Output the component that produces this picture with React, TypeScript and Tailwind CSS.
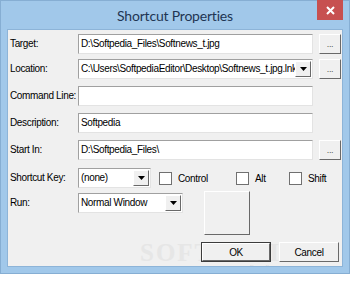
import React from "react";

const font = { fontFamily: '"Liberation Sans", Arial, sans-serif' };
const txt = "text-[10px] tracking-[-0.35px] text-black";

function Edit({ value = "", w = "w-[235px]" }: { value?: string; w?: string }) {
  return (
    <div
      className={`${w} h-[20px] shrink-0 overflow-hidden whitespace-nowrap border border-t-[#a0a0a0] border-l-[#a0a0a0] border-b-[#e3e3e3] border-r-[#e3e3e3] bg-white pl-[2px] leading-[18px] ${txt}`}
    >
      {value}
    </div>
  );
}

function Arrow() {
  return (
    <div className="flex h-[16px] w-[16px] shrink-0 items-center justify-center border border-t-white border-l-white border-b-[#696969] border-r-[#696969] bg-[#f0f0f0]">
      <svg width="7" height="4" viewBox="0 0 7 4">
        <path d="M0 0h7L3.5 4z" fill="#000" />
      </svg>
    </div>
  );
}

function Combo({ value, w }: { value: string; w: string }) {
  return (
    <div
      className={`${w} flex h-[20px] shrink-0 items-center border border-t-[#a0a0a0] border-l-[#a0a0a0] border-b-[#e3e3e3] border-r-[#e3e3e3] bg-white pr-[1px]`}
    >
      <div className={`min-w-0 flex-1 overflow-hidden whitespace-nowrap pl-[2px] leading-[18px] ${txt}`}>
        {value}
      </div>
      <Arrow />
    </div>
  );
}

function Btn({ children, w, h = "h-[20px]", def = false }: { children?: React.ReactNode; w: string; h?: string; def?: boolean }) {
  return (
    <div className={`${w} ${h} shrink-0 ${def ? "border border-[#3c3c3c]" : ""}`}>
      <div className={`flex h-full w-full items-center justify-center border border-t-white border-l-white border-b-[#696969] border-r-[#696969] bg-[#f0f0f0] ${txt}`}>
        {children}
      </div>
    </div>
  );
}

function Dots() {
  return (
    <div className="ml-[6px]">
      <Btn w="w-[22px]">
        <span className="text-[9px] leading-none text-[#555]">...</span>
      </Btn>
    </div>
  );
}

function Label({ children }: { children: React.ReactNode }) {
  return <div className={`w-[70px] shrink-0 whitespace-nowrap pl-[2px] leading-[20px] ${txt}`}>{children}</div>;
}

function Check({ label, w }: { label: string; w: string }) {
  return (
    <div className={`${w} flex shrink-0 items-center gap-[6px]`}>
      <div className="h-[13px] w-[13px] border border-[#707070] bg-white" />
      <span className={txt}>{label}</span>
    </div>
  );
}

export default function App() {
  return (
    <div className="h-[282px] w-[350px] bg-white" style={font}>
      <div className="flex h-[274px] w-[350px] flex-col border border-[#86aed3] bg-[#a1c8ea] px-[6px] pb-[6px]">
        {/* title bar */}
        <div className="relative flex h-[28px] shrink-0 items-center justify-center pt-[1px]">
          <span
            className="text-[14px] tracking-[-0.2px] text-[#1f3553]"
            style={{ fontFamily: 'Lato, "Noto Sans", sans-serif' }}
          >
            Shortcut Properties
          </span>
          <div className="absolute right-[0px] top-[-1px] flex h-[20px] w-[26px] items-center justify-center bg-[#c75050]">
            <svg width="9" height="9" viewBox="0 0 9 9">
              <path d="M1 1l7 7M8 1L1 8" stroke="#fff" strokeWidth="2" />
            </svg>
          </div>
        </div>

        {/* client area */}
        <div className="flex flex-1 flex-col overflow-hidden border border-[#8db4d8] bg-[#f0f0f0]">
          <div className="mt-[4px] flex h-[20px] items-center">
            <Label>Target:</Label>
            <Edit value="D:\Softpedia_Files\Softnews_t.jpg" />
            <Dots />
          </div>
          <div className="mt-[5px] flex h-[20px] items-center">
            <Label>Location:</Label>
            <Combo w="w-[235px]" value="C:\Users\SoftpediaEditor\Desktop\Softnews_t.jpg.lnk" />
            <Dots />
          </div>
          <div className="mt-[7px] flex h-[20px] items-center">
            <Label>Command Line:</Label>
            <Edit />
          </div>
          <div className="mt-[7px] flex h-[20px] items-center">
            <Label>Description:</Label>
            <Edit value="Softpedia" />
          </div>
          <div className="mt-[7px] flex h-[20px] items-center">
            <Label>Start In:</Label>
            <Edit value="D:\Softpedia_Files\" />
            <Dots />
          </div>
          <div className="mt-[8px] flex h-[20px] items-center">
            <Label>Shortcut Key:</Label>
            <Combo w="w-[73px]" value="(none)" />
            <div className="ml-[8px] flex items-center">
              <Check w="w-[77px]" label="Control" />
              <Check w="w-[53px]" label="Alt" />
              <Check w="w-[50px]" label="Shift" />
            </div>
          </div>
          <div className="mt-[3px] flex">
            <div className="mt-[2px] flex h-[20px] items-center">
              <Label>Run:</Label>
              <Combo w="w-[105px]" value="Normal Window" />
            </div>
            <div className="ml-[21px]">
              <Btn w="w-[46px]" h="h-[44px]" />
            </div>
          </div>
          <div className="relative mt-[7px] flex">
            <div
              className="pointer-events-none absolute left-[132px] top-[-8px] text-[25px] font-bold tracking-[2px] text-[#e6e6e6]"
              style={{ fontFamily: '"Liberation Serif", serif' }}
            >
              SOFTPEDIA
            </div>
            <div className="pointer-events-none absolute left-[214px] top-[21px] text-[8px] leading-[10px] text-[#dadada]">
              www.softpedia.com
            </div>
            <div className="relative ml-[193px]">
              <Btn w="w-[70px]" def>
                OK
              </Btn>
            </div>
            <div className="relative ml-[8px]">
              <Btn w="w-[60px]">Cancel</Btn>
            </div>
          </div>
        </div>
      </div>
    </div>
  );
}
